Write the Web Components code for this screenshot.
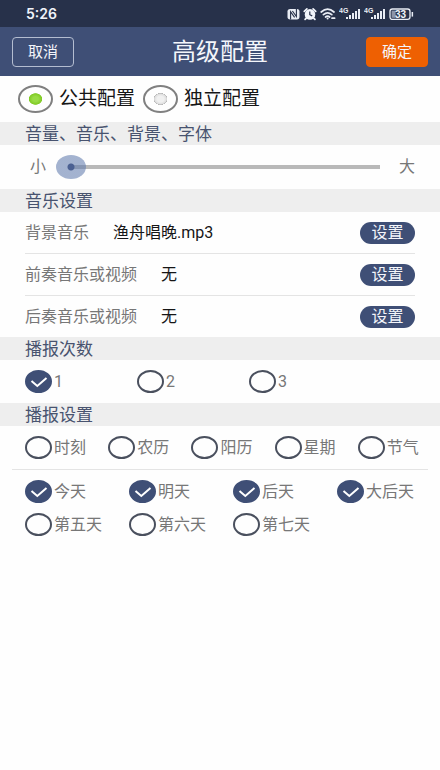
<!DOCTYPE html>
<html lang="zh-CN">
<head>
<meta charset="utf-8">
<meta name="viewport" content="width=device-width, initial-scale=1">
<title>高级配置</title>
<style>
  :root {
    --navy: #3f4f76;
    --band: #eeeeee;
    --muted: #777777;
    --line: #e4e4e4;
  }
  body {
    margin: 0;
    background: #fefefe;
    color: var(--muted);
    font: 16px/24px Roboto, "Noto Sans CJK SC", sans-serif;
  }
</style>
</head>
<body>
<settings-page></settings-page>

<script>
const define = (name, html, setup) => {
  const template = document.createElement('template');
  template.innerHTML = html;
  customElements.define(name, class extends HTMLElement {
    constructor() {
      super();
      this.attachShadow({ mode: 'open' }).append(template.content.cloneNode(true));
    }
    connectedCallback() {
      if (setup) setup(this, this.shadowRoot);
    }
  });
};

define('signal-bars', `
  <style>
    :host { display: block; }
    svg { display: block; }
    text { font: 700 7px "Liberation Sans", sans-serif; fill: #e9edf5; }
  </style>
  <svg width="22" height="14" viewBox="0 0 22 14" fill="#e9edf5" aria-hidden="true">
    <text x="0" y="6">4G</text>
    <rect x="7" y="10" width="2" height="2"/>
    <rect x="10" y="8" width="2" height="4"/>
    <rect x="13" y="6" width="2" height="6"/>
    <rect x="16" y="4" width="2" height="8"/>
    <rect x="19" y="2" width="2" height="10"/>
  </svg>`);

define('status-bar', `
  <style>
    :host {
      display: flex; align-items: center; justify-content: space-between;
      height: 27px; padding: 0 26px; background: #27314a; color: #f1f4fa;
    }
    time { font: 600 14px/20px Inter, sans-serif; }
    .icons { display: flex; align-items: center; gap: 3px; }
    svg { display: block; }
    text { font: 700 10px "Liberation Sans", sans-serif; fill: #f1f4fa; }
  </style>
  <time>5:26</time>
  <div class="icons">
    <svg width="13" height="14" viewBox="0 0 13 14" aria-hidden="true">
      <rect x=".5" y="2" width="12" height="10.4" rx="2.6" fill="#e9edf5"/>
      <path d="M3.6 12.4V4.8L7.6 10.4M9.4 2V9.6L5.4 4" fill="none" stroke="#27314a" stroke-width="1.1"/>
    </svg>
    <svg width="14" height="14" viewBox="0 0 14 14" aria-hidden="true">
      <circle cx="7" cy="7.4" r="5.3" fill="#f1f4fa"/>
      <path d="M1.3 4.3L3.9 1.9M12.7 4.3L10.1 1.9M3.1 11.4L2.1 12.4M10.9 11.4L11.9 12.4" stroke="#f1f4fa" stroke-width="1.8" stroke-linecap="round"/>
      <path d="M6.8 4.5V7.7L9.2 8.9" fill="none" stroke="#27314a" stroke-width="1.2"/>
    </svg>
    <svg width="16" height="14" viewBox="0 0 16 14" fill="none" stroke="#e9edf5" stroke-width="1.7" stroke-linecap="round" aria-hidden="true">
      <path d="M1.2 5Q7.6 -.6 14 5M3.4 7.6Q7.6 4 11.8 7.6M5.6 10Q7.6 8.2 9.6 10"/>
      <circle cx="7.6" cy="11.6" r="1" fill="#e9edf5" stroke="none"/>
      <path d="M12 11.2h2.6"/>
    </svg>
    <signal-bars></signal-bars>
    <signal-bars></signal-bars>
    <svg width="25" height="14" viewBox="0 0 25 14" aria-hidden="true">
      <rect x="1" y="2" width="20" height="10.4" rx="2.4" fill="none" stroke="#e9edf5" stroke-width="1.3"/>
      <rect x="2.6" y="3.6" width="4" height="7.2" fill="#8d95a8"/>
      <rect x="22.6" y="5" width="1.5" height="4.6" fill="#e9edf5"/>
      <text x="6" y="10.8">33</text>
    </svg>
  </div>`);

define('title-bar', `
  <style>
    :host {
      display: grid; grid-template-columns: 62px 1fr 62px; align-items: center;
      height: 49px; padding: 0 12px; background: var(--navy); color: #f4f6fb;
    }
    h1 { margin: 0; font-size: 24px; line-height: 32px; font-weight: 400; text-align: center; }
    button {
      box-sizing: border-box; height: 30px; padding: 0; border-radius: 4px;
      font: inherit; font-size: 15px; color: inherit; background: none; border: 1px solid #b4bdd0;
    }
    .ok { background: #ee6002; border-color: #ee6002; }
  </style>
  <button type="button">取消</button>
  <h1><slot></slot></h1>
  <button type="button" class="ok">确定</button>`);

define('mode-picker', `
  <style>
    :host { display: flex; align-items: center; gap: 6px; height: 46px; padding: 0 18px; box-sizing: border-box; color: #161616; }
    label { display: flex; align-items: center; gap: 6px; font-size: 19px; line-height: 28px; white-space: nowrap; }
    input {
      appearance: none; box-sizing: border-box; flex: none; width: 35px; height: 28px; margin: 0;
      border: 2px solid #808080; border-radius: 50%;
      background: radial-gradient(ellipse 7px 6px at 50% 50%, #f0f0f0 0 50%, #dddddd 85%, #b4b4b4 96%, transparent 100%);
    }
    input:checked { background: radial-gradient(ellipse 7px 6px at 50% 50%, #98dc45 0 40%, #80ca24 90%, transparent 100%); }
    span { min-width: 78px; }
  </style>
  <label><input type="radio" name="mode" checked><span>公共配置</span></label>
  <label><input type="radio" name="mode"><span>独立配置</span></label>`);

define('setting-section', `
  <style>
    :host { display: block; }
    h2 {
      box-sizing: border-box; margin: 0; padding: 0 25px; height: 23px; background: var(--band);
      color: #48536f; font-size: 17px; line-height: 24px; font-weight: 400;
    }
  </style>
  <h2></h2>
  <div><slot></slot></div>`,
  (el, root) => { root.querySelector('h2').textContent = el.getAttribute('heading'); });

define('size-slider', `
  <style>
    :host { display: flex; align-items: center; height: 44px; padding: 0 25px 0 30px; }
    input {
      appearance: none; flex: 1; min-width: 0; height: 24px; margin: 0 19px 0 10px;
      background: linear-gradient(#b9b9b9, #b9b9b9) right center / calc(100% - 15px) 4px no-repeat;
    }
    input::-webkit-slider-thumb {
      appearance: none; width: 30px; height: 24px; border-radius: 50%;
      background: radial-gradient(circle at 50% 50%, #4b6092 0 3px, rgba(98, 124, 174, .58) 4px);
    }
  </style>
  <span>小</span>
  <input type="range" min="0" max="100" value="0" aria-label="字体大小">
  <span>大</span>`);

define('media-row', `
  <style>
    :host { display: flex; align-items: center; height: 41px; margin: 0 25px; border-bottom: 1px solid var(--line); }
    :host(:last-of-type) { border-bottom: 0; }
    .value { flex: 1; margin-left: 24px; color: #161616; }
    button {
      width: 55px; height: 22px; padding: 0; border: 0; border-radius: 11px;
      background: var(--navy); color: #f4f6fb; font: inherit; line-height: 20px;
    }
  </style>
  <span class="name"></span>
  <span class="value"><slot></slot></span>
  <button type="button">设置</button>`,
  (el, root) => {
    const name = el.getAttribute('name');
    root.querySelector('.name').textContent = name;
    root.querySelector('button').setAttribute('aria-label', '设置' + name);
  });

define('tick-option', `
  <style>
    :host { display: block; }
    label { display: flex; align-items: center; gap: 2px; white-space: nowrap; }
    .mark { display: grid; flex: none; width: 27px; height: 23px; }
    .mark > * { grid-area: 1 / 1; }
    input {
      appearance: none; box-sizing: border-box; width: 27px; height: 23px; margin: 0;
      border: 2px solid #4a505e; border-radius: 50%;
    }
    input:checked { background: var(--navy); border-color: var(--navy); }
    svg { display: none; pointer-events: none; }
    input:checked + svg { display: block; }
  </style>
  <label>
    <span class="mark">
      <input type="checkbox">
      <svg width="27" height="23" viewBox="0 0 27 23" fill="none" stroke="#fff" stroke-width="2" aria-hidden="true"><path d="M6.5 11L12.3 16L21.5 8"/></svg>
    </span>
    <span><slot></slot></span>
  </label>`,
  (el, root) => { root.querySelector('input').checked = el.hasAttribute('checked'); });

define('option-grid', `
  <style>
    :host { display: grid; grid-template-columns: var(--columns); grid-auto-rows: 33px; align-items: center; margin: 0 12px; }
    ::slotted(*) { padding-left: 13px; }
  </style>
  <slot></slot>`);

define('settings-page', `
  <style>
    :host { display: block; }
    .count { --columns: repeat(3, 112px); padding: 5px 0; }
    .kinds { --columns: repeat(5, 1fr); padding: 5px 0; border-bottom: 1px solid var(--line); }
    .days { --columns: repeat(4, 1fr); padding-top: 5px; }
  </style>
  <status-bar></status-bar>
  <title-bar>高级配置</title-bar>
  <main>
    <mode-picker></mode-picker>
    <setting-section heading="音量、音乐、背景、字体">
      <size-slider></size-slider>
    </setting-section>
    <setting-section heading="音乐设置">
      <media-row name="背景音乐">渔舟唱晚.mp3</media-row>
      <media-row name="前奏音乐或视频">无</media-row>
      <media-row name="后奏音乐或视频">无</media-row>
    </setting-section>
    <setting-section heading="播报次数">
      <option-grid class="count">
        <tick-option checked>1</tick-option>
        <tick-option>2</tick-option>
        <tick-option>3</tick-option>
      </option-grid>
    </setting-section>
    <setting-section heading="播报设置">
      <option-grid class="kinds">
        <tick-option>时刻</tick-option>
        <tick-option>农历</tick-option>
        <tick-option>阳历</tick-option>
        <tick-option>星期</tick-option>
        <tick-option>节气</tick-option>
      </option-grid>
      <option-grid class="days">
        <tick-option checked>今天</tick-option>
        <tick-option checked>明天</tick-option>
        <tick-option checked>后天</tick-option>
        <tick-option checked>大后天</tick-option>
        <tick-option>第五天</tick-option>
        <tick-option>第六天</tick-option>
        <tick-option>第七天</tick-option>
      </option-grid>
    </setting-section>
  </main>`);
</script>
</body>
</html>
